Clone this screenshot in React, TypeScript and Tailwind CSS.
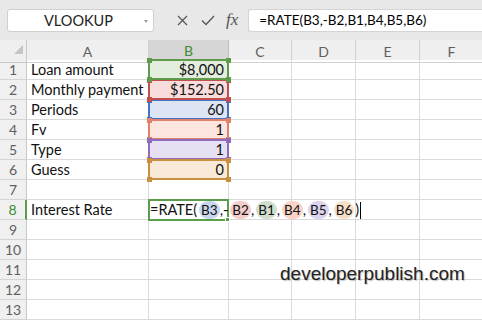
const font = "font-['Lato','Liberation_Sans',sans-serif]"

type Range = { value: string; border: string; fill: string; handle: string; z: string }

const ranges: Range[] = [
  { value: '$8,000', border: 'border-[#5e9c4c]', fill: 'bg-[#e4eedf]', handle: 'bg-[#5e9c4c]', z: 'z-30' },
  { value: '$152.50', border: 'border-[#c0504d]', fill: 'bg-[#f9dddc]', handle: 'bg-[#c0504d]', z: 'z-20' },
  { value: '60', border: 'border-[#4472c4]', fill: 'bg-[#dde5f4]', handle: 'bg-[#4472c4]', z: 'z-10' },
  { value: '1', border: 'border-[#e0826a]', fill: 'bg-[#fce5de]', handle: 'bg-[#e0826a]', z: 'z-40' },
  { value: '1', border: 'border-[#8d6cbf]', fill: 'bg-[#e7e0f2]', handle: 'bg-[#8d6cbf]', z: 'z-50' },
  { value: '0', border: 'border-[#c9913f]', fill: 'bg-[#f9e9d8]', handle: 'bg-[#c9913f]', z: 'z-[60]' },
]

const labels = ['Loan amount', 'Monthly payment', 'Periods', 'Fv', 'Type', 'Guess']

const refs = [
  { id: 'B3', bg: 'bg-[#c8d5ee]', sep: ',-' },
  { id: 'B2', bg: 'bg-[#f4cdcb]', sep: ',' },
  { id: 'B1', bg: 'bg-[#d0dfcb]', sep: ',' },
  { id: 'B4', bg: 'bg-[#f8d3c6]', sep: ',' },
  { id: 'B5', bg: 'bg-[#dcd3ee]', sep: ',' },
  { id: 'B6', bg: 'bg-[#f6dfc7]', sep: '' },
]

const cols = 'grid grid-cols-[27px_122px_80px_63px_64px_64px_64px]'
const cell = 'h-5 border-r border-b border-[#dadada]'

function RowHead({ n, active }: { n: number; active?: boolean }) {
  return (
    <div
      className={`h-5 border-b border-[#d4d4d4] bg-[#f0f0f0] flex items-center justify-center text-[14px] ${
        active ? 'text-[#3f8a33] border-r-2 border-r-[#5a9e4b]' : 'text-[#5f5f5f] border-r border-r-[#c8c8c8]'
      }`}
    >
      {n}
    </div>
  )
}

function RangeCell({ r }: { r: Range }) {
  const h = `absolute w-[5px] h-[5px] ${r.handle}`
  return (
    <div className={`${cell} relative`}>
      <div className={`absolute -left-px -top-px w-[81px] h-[21px] border-2 ${r.border} ${r.fill} ${r.z} flex items-center justify-end pr-[3px]`}>
        {r.value}
        <div className={`${h} -left-[3.5px] -top-[3.5px]`} />
        <div className={`${h} -right-[3.5px] -top-[3.5px]`} />
        <div className={`${h} -left-[3.5px] -bottom-[3.5px]`} />
        <div className={`${h} -right-[3.5px] -bottom-[3.5px]`} />
      </div>
    </div>
  )
}

function Empty() {
  return (
    <>
      <div className={cell} />
      <div className={cell} />
      <div className={cell} />
      <div className={cell} />
    </>
  )
}

export default function App() {
  return (
    <div className={`relative w-[482px] h-[321px] overflow-hidden bg-white ${font}`}>
      {/* formula bar */}
      <div className="h-10 bg-[#e8e8e8] flex items-start pt-[9px] pl-[7px]">
        <div className="relative w-[147px] h-[23px] bg-white border border-[#cfcfcf] rounded-[3px] flex items-center justify-center text-[14.5px] text-[#222] pr-1">
          VLOOKUP
          <div className="absolute right-[5px] top-[10px] w-0 h-0 border-l-[2.5px] border-r-[2.5px] border-t-[3px] border-l-transparent border-r-transparent border-t-[#9a9a9a]" />
        </div>
        <div className="flex items-center h-[23px] ml-[23px] gap-[13px]">
          <svg width="11" height="11" viewBox="0 0 11 11" stroke="#555" strokeWidth="1.2" fill="none">
            <path d="M1 1L10 10M10 1L1 10" />
          </svg>
          <svg width="14" height="11" viewBox="0 0 14 11" stroke="#555" strokeWidth="1.3" fill="none">
            <path d="M1 5.5L5 9.5L13 1" />
          </svg>
          <span className="font-['Liberation_Serif',serif] italic text-[17px] leading-none text-[#555] -mt-[2px] -ml-[2px]">fx</span>
        </div>
        <div className="ml-[10px] flex-1 h-[23px] bg-white border border-[#d4d4d4] rounded-l-[3px] border-r-0 flex items-center pl-[10px] text-[13.5px] text-black">
          =RATE(B3,-B2,B1,B4,B5,B6)
        </div>
      </div>

      {/* column headers */}
      <div className={`${cols} h-5 bg-[#efefef] text-[14px] text-[#5f5f5f]`}>
        <div className="relative border-r border-b border-[#c8c8c8]">
          <svg className="absolute left-[14px] top-[5px]" width="9" height="9" viewBox="0 0 9 9">
            <polygon points="9,0 9,9 0,9" fill="#c4c4c4" />
          </svg>
        </div>
        <div className="border-r border-b border-[#d0d0d0] flex items-center justify-center">A</div>
        <div className="bg-[#d6d6d6] border-r border-[#bdbdbd] border-b-2 border-b-[#5a9e4b] flex items-center justify-center text-[#3f8a33]">B</div>
        <div className="border-r border-b border-[#d0d0d0] flex items-center justify-center">C</div>
        <div className="border-r border-b border-[#d0d0d0] flex items-center justify-center">D</div>
        <div className="border-r border-b border-[#d0d0d0] flex items-center justify-center">E</div>
        <div className="border-r border-b border-[#d0d0d0] flex items-center justify-center">F</div>
      </div>

      {/* rows */}
      <div className={`${cols} text-[14.5px] text-[#111]`}>
        {ranges.map((r, i) => (
          <div key={i} className="contents">
            <RowHead n={i + 1} />
            <div className={`${cell} flex items-center pl-[4px]`}>{labels[i]}</div>
            <RangeCell r={r} />
            <Empty />
          </div>
        ))}

        <RowHead n={7} />
        <div className={cell} />
        <div className={cell} />
        <Empty />

        <RowHead n={8} active />
        <div className={`${cell} flex items-center pl-[4px]`}>Interest Rate</div>
        <div className={`${cell} relative`}>
          <div className="absolute -left-px -top-px w-[81px] h-[22px] border-2 border-[#5a9e4b] z-[70]">
            <div className="absolute -right-[3px] -bottom-[3px] w-[5px] h-[5px] bg-[#5a9e4b] border border-white" />
          </div>
          <div className="absolute left-[1px] top-0 h-5 flex items-center whitespace-nowrap z-[80]">
            =RATE(
            {refs.map((r) => (
              <span key={r.id} className="flex items-center">
                <span className={`${r.bg} rounded-full px-[2px] ml-[2px] h-[18px] flex items-center text-[13.5px]`}>{r.id}</span>
                {r.sep}
              </span>
            ))}
            <span className="ml-[1px]">)</span>
            <span className="ml-[1px] w-px h-[17px] bg-black" />
          </div>
        </div>
        <Empty />

        {[9, 10, 11, 12, 13].map((n) => (
          <div key={n} className="contents">
            <RowHead n={n} />
            <div className={cell} />
            <div className={cell} />
            <Empty />
          </div>
        ))}
      </div>

      <div className="absolute left-[280px] top-[260px] font-['Liberation_Sans',sans-serif] text-[19px] text-[#222] [text-shadow:1px_1px_1px_rgba(0,0,0,0.25)]">
        developerpublish.com
      </div>
    </div>
  )
}
